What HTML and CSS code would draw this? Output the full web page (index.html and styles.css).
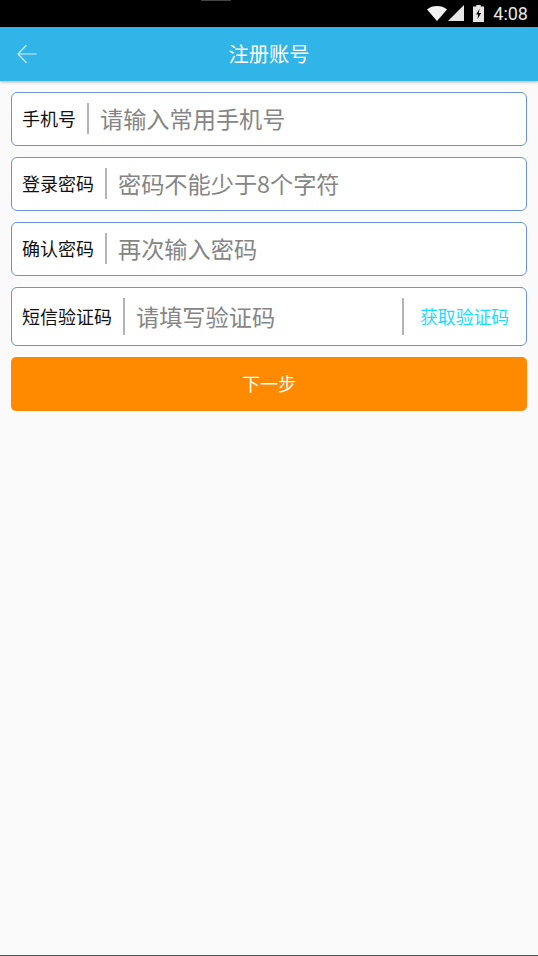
FILE: index.html
```html
<!DOCTYPE html>
<html lang="zh-CN">
<head>
<meta charset="utf-8">
<title>注册账号</title>
<link rel="stylesheet" href="styles.css">
</head>
<body>
<div class="app">
  <div class="status">
    <div class="notch"></div>
    <svg class="i-wifi" width="20" height="15" viewBox="0 0 19 14" preserveAspectRatio="none"><path d="M0 3.2C5-1 14-1 19 3.2L9.5 14z" fill="#f2f2f2"/></svg>
    <svg class="i-signal" width="16" height="16" viewBox="0 0 16 15" preserveAspectRatio="none"><path d="M16 0V15H0z" fill="#e6e6e6"/></svg>
    <svg class="i-batt" width="11" height="17" viewBox="0 0 10 16" preserveAspectRatio="none"><path fill-rule="evenodd" d="M3 0H7V1.5H10V16H0V1.5H3zM6 3.5 2.8 9H4.8L4 13.5 7.4 7.5H5.2z" fill="#e6e6e6"/></svg>
    <span class="time">4:08</span>
  </div>
  <header class="bar">
    <svg class="back" width="20" height="20" viewBox="0 0 20 20"><path d="M19.5 10H1M9.5 1.2 1 10l8.5 8.8" fill="none" stroke="#d3eefa" stroke-width="1.2"/></svg>
    <h1 class="title">注册账号</h1>
  </header>
  <main class="form">
    <div class="field">
      <span class="label">手机号</span><span class="sep"></span>
      <span class="hint">请输入常用手机号</span>
    </div>
    <div class="field">
      <span class="label">登录密码</span><span class="sep"></span>
      <span class="hint">密码不能少于8个字符</span>
    </div>
    <div class="field">
      <span class="label">确认密码</span><span class="sep"></span>
      <span class="hint">再次输入密码</span>
    </div>
    <div class="field field-code">
      <span class="label">短信验证码</span><span class="sep"></span>
      <span class="hint">请填写验证码</span>
      <span class="sep sep-code"></span>
      <span class="code-link">获取验证码</span>
    </div>
    <div class="next">下一步</div>
  </main>
</div>
</body>
</html>
```
FILE: styles.css
```css
* { box-sizing: border-box; }
html, body { margin: 0; height: 100%; }
body {
  font-family: "Noto Sans CJK SC", "Roboto", sans-serif;
  background: #fafafa;
}
.app {
  width: 538px;
  height: 956px;
  display: flex;
  flex-direction: column;
  border-bottom: 1px solid #3a5f55;
  overflow: hidden;
}
.status {
  position: relative;
  height: 27px;
  flex: none;
  background: #000;
  display: flex;
  align-items: center;
  justify-content: flex-end;
  padding-right: 10px;
}
.notch {
  position: absolute;
  left: 201px;
  top: 0;
  width: 30px;
  height: 1px;
  background: #444;
}
.i-wifi { margin-right: 1px; margin-top: -1px; }
.i-signal { margin-right: 9px; margin-top: -1px; }
.i-batt { margin-right: 9px; margin-top: -1px; }
.time {
  font-family: "Roboto", sans-serif;
  font-size: 18px;
  color: #e6e6e6;
  line-height: 27px;
}
.bar {
  position: relative;
  height: 54px;
  flex: none;
  background: #31b4e7;
  box-shadow: 0 1px 3px rgba(0, 0, 0, .3);
  display: flex;
  align-items: center;
  justify-content: center;
  padding-bottom: 2px;
}
.back { position: absolute; left: 17px; top: 17px; }
.title {
  margin: 0;
  font-size: 20.3px;
  font-weight: 400;
  color: #fff;
}
.form {
  padding: 11px 11px 0;
  display: flex;
  flex-direction: column;
  gap: 11px;
}
.field {
  height: 54px;
  background: #fff;
  border: 1px solid #6b93d6;
  border-radius: 6px;
  display: flex;
  align-items: center;
  padding-left: 10px;
  padding-bottom: 2px;
}
.field-code { height: 59px; padding-bottom: 0; }
.label {
  font-size: 18px;
  color: #111;
  white-space: nowrap;
}
.sep {
  width: 2px;
  height: 31px;
  background: #b4b4b4;
  margin-left: 11px;
  flex: none;
}
.field-code .sep { height: 37px; }
.hint {
  font-size: 23.2px;
  color: #858585;
  margin-left: 11px;
  white-space: nowrap;
}
.field-code .label,
.field-code .hint { margin-bottom: 2px; }
.field-code .sep-code { margin-left: auto; }
.code-link {
  font-size: 17.8px;
  color: #1adcff;
  margin: 0 17px 2px 16.5px;
  white-space: nowrap;
}
.next {
  height: 54px;
  background: #ff8a00;
  border-radius: 5px;
  color: #fff;
  font-size: 18px;
  display: flex;
  align-items: center;
  justify-content: center;
  padding-bottom: 3px;
}
```
